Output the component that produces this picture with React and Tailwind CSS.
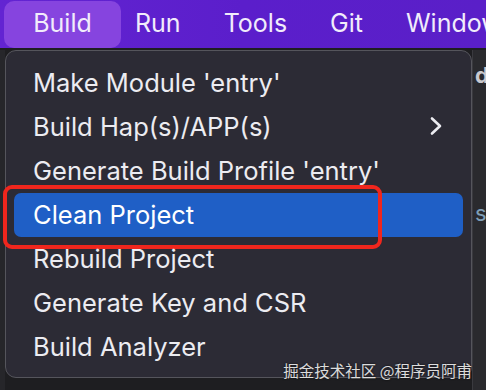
// ── IDE menubar with the "Build" dropdown open ───────────────────
const MENUBAR = ["Build", "Run", "Tools", "Git", "Window"];

const ITEMS = [
  { label: "Make Module 'entry'" },
  { label: "Build Hap(s)/APP(s)", sub: true },
  { label: "Generate Build Profile 'entry'" },
  { label: "Clean Project", active: true },
  { label: "Rebuild Project" },
  { label: "Generate Key and CSR" },
  { label: "Build Analyzer" },
];

const Chevron = () => (
  <svg width="14" height="20" viewBox="0 0 14 20" fill="none" stroke="currentColor" strokeWidth="2.6" strokeLinecap="round" strokeLinejoin="round">
    <path d="M3 2.5l8 7.5-8 7.5" />
  </svg>
);

const MenuItem = ({ label, sub, active }) => (
  <div className={`relative h-[44px] flex items-center pl-[19px] pr-[20px] rounded-[7px] ${active ? "bg-[#1f5fc6] text-white" : "text-[#ececf1]"}`}>
    <span className="flex-1 text-[25.5px] whitespace-nowrap">{label}</span>
    {sub && <span className="text-[#ececf1] mt-[-2px]"><Chevron /></span>}
    {active && (
      <div className="absolute left-[-11px] top-[-8px] w-[379px] h-[64px] rounded-[9px] border-[4px] border-[#f0261d]" />
    )}
  </div>
);

export default function App() {
  return (
    <div className="relative w-[486px] h-[390px] overflow-hidden bg-[#1e1e21] font-['Inter','Liberation_Sans',sans-serif]">
      {/* Menubar */}
      <div className="h-[48px] flex items-center pl-[4px] bg-gradient-to-r from-[#6324d2] via-[#5b1ecb] to-[#5a1fc8] text-[#f1ecfb] text-[25px] whitespace-nowrap">
        {MENUBAR.map((m, i) => (
          <div key={m} className={`shrink-0 h-[47px] flex items-center ${i === 0 ? "w-[117px] justify-center rounded-[10px] bg-[#8644df] mr-[14px]" : "mr-[43px]"}`}>
            {m}
          </div>
        ))}
      </div>

      {/* Body */}
      <div className="flex h-[342px] pt-[2px]">
        <div className="w-[5px] shrink-0 bg-[#26262a]" />
        <div className="w-[467px] shrink-0 h-[328px] rounded-[11px] border border-[#55555c] bg-[#2c2b35] px-[8px] pt-[10px]">
          {ITEMS.map((it) => (
            <MenuItem key={it.label} {...it} />
          ))}
        </div>
        <div className="flex-1 min-w-0 overflow-hidden border-l border-[#3a3a3f] bg-[#2a2a2e] pl-[2px] text-[#c9c9cf] text-[22px] leading-none">
          <div className="mt-[14px] font-bold">d</div>
          <div className="mt-[116px] text-[#7f9fb8]">sc</div>
        </div>
      </div>

      {/* Watermark */}
      <div className="absolute right-[14px] top-[359px] text-[15.5px] text-white/85 font-['Noto_Sans_CJK_SC',sans-serif] [text-shadow:0_0_2px_#000]">
        掘金技术社区 @程序员阿甫
      </div>
    </div>
  );
}
